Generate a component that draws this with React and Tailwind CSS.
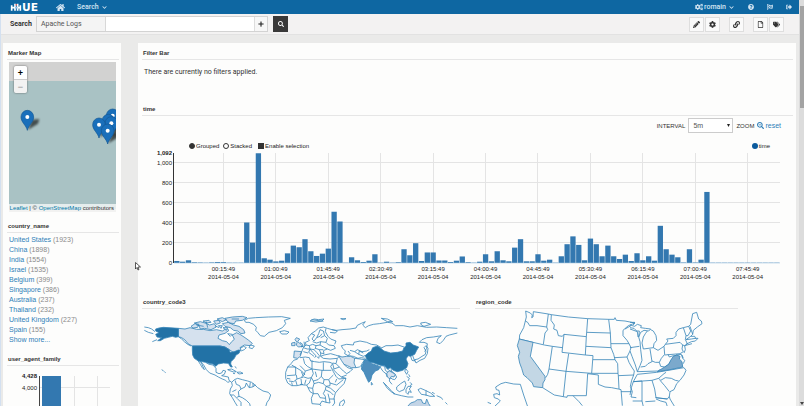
import { useState } from 'react'
import {
  FaHome,
  FaCogs,
  FaCog,
  FaQuestionCircle,
  FaFlagCheckered,
  FaSignOutAlt,
  FaPencilAlt,
  FaLink,
  FaRegFile,
  FaTags,
  FaSearch,
  FaPlus,
  FaChevronDown,
  FaSearchMinus,
} from 'react-icons/fa'

const countries = [
  ['United States', 1923],
  ['China', 1898],
  ['India', 1554],
  ['Israel', 1535],
  ['Belgium', 399],
  ['Singapore', 386],
  ['Australia', 237],
  ['Thailand', 232],
  ['United Kingdom', 227],
  ['Spain', 155],
]

// hits per 5 minute bucket
const hits = [
  20, 13, 27, 7, 5, 3, 6, 10, 9, 3, 3, 3, 403, 203, 1092, 47, 33, 16, 23, 96, 173, 157, 237, 117,
  70, 93, 143, 510, 413, 3, 57, 27, 10, 23, 87, 3, 13, 3, 8, 137, 77, 197, 20, 105, 105, 25, 25,
  10, 23, 65, 8, 3, 13, 87, 17, 117, 27, 17, 153, 237, 17, 17, 87, 23, 33, 3, 67, 187, 265, 180,
  27, 243, 187, 67, 173, 67, 40, 83, 20, 97, 27, 67, 23, 370, 137, 83, 57, 5, 137, 5, 33, 707,
  3, 3, 3, 3, 3, 3, 3, 3, 3, 3, 3, 3,
]

const ticks = [
  '00:15:49', '01:00:49', '01:45:49', '02:30:49', '03:15:49', '04:00:49',
  '04:45:49', '05:30:49', '06:15:49', '07:00:49', '07:45:49',
]

const pins = [
  [82, 231],
  [338, 227],
  [325, 243],
  [334, 250],
  [297, 254],
  [323, 272],
]

const chartFont = 'font-["Liberation_Sans",sans-serif] text-[6px]'

function Title({ children }) {
  return (
    <h2 className="border-b border-[#e6e6e6] pt-[6px] pb-[2px] text-[6px] leading-[8px] font-bold text-[#333] pl-px">
      {children}
    </h2>
  )
}

function ToolButton({ label, icon: Icon }) {
  return (
    <button
      aria-label={label}
      className="flex h-[15px] w-[15px] items-center justify-center border border-[#dedede] bg-[#fafafa] text-[#333]"
    >
      <Icon className="h-[7px] w-[7px]" />
    </button>
  )
}

function Logo() {
  return (
    <a href="#home" aria-label="Hue" className="flex h-[14px] items-center text-white">
      <svg viewBox="0 0 90 36" className="h-[12px] w-[30px] overflow-visible">
        <g fill="none" stroke="#fff" strokeWidth="5">
          <path d="M2 13V29M2 20H12M12 8V29" />
          <path d="M20 8V29M28 13V29M20 20H28" />
        </g>
        <path d="M12 20H20" stroke="#9cc4ea" strokeWidth="5" />
        <rect x="14" y="9" width="4" height="5" fill="#d66" />
        <text x="33" y="30" fill="#fff" className='font-["DejaVu_Sans",sans-serif] text-[32px] font-bold'>
          UE
        </text>
      </svg>
    </a>
  )
}

function TopNav() {
  return (
    <nav className="flex h-[14px] items-center bg-[#0e67a2] pl-[11px] pr-[7px] font-[family-name:Roboto,sans-serif] text-[7px] leading-[10px] font-medium text-[#d5e6f3]">
      <Logo />
      <a href="#home" aria-label="Home" className="ml-[15px]">
        <FaHome className="h-[9px] w-[9px]" />
      </a>
      <button className="ml-[12px] flex items-center gap-[3px]">
        Search <FaChevronDown className="h-[5px] w-[5px]" />
      </button>
      <button className="ml-auto flex items-center gap-px">
        <FaCogs className="h-[8px] w-[8px]" /> romain
        <FaChevronDown className="ml-[2px] h-[5px] w-[5px]" />
      </button>
      <a href="#help" aria-label="Help" className="ml-[14px]">
        <FaQuestionCircle className="h-[6px] w-[6px]" />
      </a>
      <a href="#tour" aria-label="Tour" className="ml-[13px]">
        <FaFlagCheckered className="h-[6px] w-[6px]" />
      </a>
      <a href="#logout" aria-label="Sign out" className="ml-[13px]">
        <FaSignOutAlt className="h-[6px] w-[6px]" />
      </a>
    </nav>
  )
}

function Toolbar() {
  const [query, setQuery] = useState('')
  return (
    <div className="flex h-[21px] items-center border-b border-[#e2e2e2] bg-[#f3f2f2] pl-[9px] pr-[15px] font-[family-name:Roboto,sans-serif] text-[7px] leading-[10px]">
      <label htmlFor="query" className="w-[22px] font-bold text-[#333]">
        Search
      </label>
      <div className="ml-[4px] flex h-[16px] items-stretch border border-[#d3d3d3]">
        <button className="w-[69px] border-r border-[#d8d8d8] bg-[#f4f4f4] pl-[4px] text-left text-[#555]">
          Apache Logs
        </button>
        <input
          id="query"
          value={query}
          onChange={(e) => setQuery(e.target.value)}
          className="w-[148px] bg-white px-1 outline-none"
        />
        <button
          aria-label="Add"
          className="flex w-[13px] items-center justify-center border-l border-[#ddd] bg-[#f7f7f7] text-[#222]"
        >
          <FaPlus className="h-[6px] w-[6px]" />
        </button>
      </div>
      <button
        aria-label="Run search"
        className="ml-[5px] flex h-[16px] w-[15px] items-center justify-center bg-[#393939] text-white"
      >
        <FaSearch className="h-[6px] w-[6px]" />
      </button>
      <div className="ml-auto flex items-center">
        <div className="flex gap-px">
          <ToolButton label="Edit" icon={FaPencilAlt} />
          <ToolButton label="Settings" icon={FaCog} />
        </div>
        <div className="mx-[9px]">
          <ToolButton label="Share" icon={FaLink} />
        </div>
        <div className="flex gap-px">
          <ToolButton label="New" icon={FaRegFile} />
          <ToolButton label="Dashboards" icon={FaTags} />
        </div>
      </div>
    </div>
  )
}

function MarkerMap() {
  return (
    <div className="relative mt-[2px] mr-[3px] ml-[2px] overflow-hidden">
      <svg viewBox="27 66 321 450" className="block w-full">
        <defs>
          <filter id="soft" x="-50%" y="-50%" width="200%" height="200%">
            <feGaussianBlur stdDeviation="3" />
          </filter>
        </defs>
        <rect x="27" y="66" width="321" height="450" fill="#d2d2d1" />
        <rect x="27" y="123" width="321" height="384" fill="#a9c2c4" />
        {pins.map(([x, y]) => (
          <g key={`${x}-${y}`} transform={`translate(${x} ${y})`}>
            <path d="M2 38L14 8L36 6L32 20Z" fill="#000" opacity="0.6" filter="url(#soft)" />
            <path
              d="M0 40C-3 25-19 16-19 0A19 20 0 0 1 19 0C19 16 3 25 0 40Z"
              fill="#1a6fba"
              stroke="#135894"
              strokeWidth="2"
            />
            <circle r="6" fill="#fff" />
          </g>
        ))}
      </svg>
      <div className="absolute top-[4px] left-[5px] w-[13px] overflow-hidden rounded-xs text-[9px] font-bold shadow-[0_0_2px_#555]">
        <button aria-label="Zoom in" className="block h-[14px] w-full border-b border-[#ccc] bg-white leading-[12px] text-black">
          +
        </button>
        <button aria-label="Zoom out" className="block h-[13px] w-full bg-[#f2f2f2] leading-[12px] text-[#aaa]">
          −
        </button>
      </div>
      <p className="absolute right-0 bottom-0 bg-white/70 px-[2px] text-[6px] leading-[8px] whitespace-nowrap text-[#333]">
        <a href="#leaflet" className="text-[#0078a8]">Leaflet</a> | ©{' '}
        <a href="#osm" className="text-[#0078a8]">OpenStreetMap</a> contributors
      </p>
    </div>
  )
}

function Sidebar() {
  return (
    <aside className="w-[118px] shrink-0 bg-[#fdfdfc] pr-[2px] pl-[4px]">
      <Title>Marker Map</Title>
      <MarkerMap />
      <div className="mt-[4px]">
        <Title>country_name</Title>
        <ul className="pt-[2px] pl-[2px] text-[7px] leading-[10px] text-[#8a8a8a]">
          {countries.map(([name, count]) => (
            <li key={name}>
              <a href="#country" className="text-[#2f7fb8]">{name}</a> ({count})
            </li>
          ))}
          <li>
            <a href="#more" className="text-[#2f7fb8]">Show more...</a>
          </li>
        </ul>
      </div>
      <div className="mt-[4px]">
        <Title>user_agent_family</Title>
        <svg viewBox="7 366 112 60" className={`block w-full ${chartFont}`} textAnchor="end" fill="#222">
          <g stroke="#e4e4e4">
            <path d="M39 387.5H110M74.5 376V426M97.5 376V426" />
          </g>
          <rect x="42" y="376" width="19" height="50" fill="#3378b0" />
          <path d="M39.5 376V426" stroke="#444" />
          <text x="37" y="378" className="font-bold">4,428</text>
          <text x="37" y="390">4,000</text>
        </svg>
      </div>
    </aside>
  )
}

function TimeChart() {
  return (
    <svg viewBox="142 150 651 142" className={`block w-full overflow-visible ${chartFont}`} fill="#222">
      <g stroke="#e4e4e4">
        {[200, 400, 600, 800, 1000].map((v) => (
          <path key={v} d={`M174 ${Math.round(263 - v * 0.1005) - 0.5}H780`} />
        ))}
        {ticks.map((t, i) => (
          <path key={t} d={`M${Math.round(223.4 + i * 52.43 - 0.5) + 0.5} 153V263`} />
        ))}
      </g>
      {hits.map((v, i) => (
        <rect
          key={i}
          x={174.2 + i * 5.825}
          y={263 - v * 0.1005}
          width="5.3"
          height={v * 0.1005}
          fill="#3378b0"
        />
      ))}
      <path d="M174 263H780" stroke="#a9c9e0" strokeWidth="0.6" />
      <path d="M173.5 153V263" stroke="#333" />
      <g textAnchor="end">
        <text x="172" y="155" className="font-bold">1,092</text>
        <text x="172" y="165">1,000</text>
        <text x="172" y="185">800</text>
        <text x="172" y="205">600</text>
        <text x="172" y="225">400</text>
        <text x="172" y="245">200</text>
        <text x="172" y="265">0</text>
      </g>
      <g textAnchor="middle">
        {ticks.map((t, i) => (
          <g key={t}>
            <text x={223.4 + i * 52.43} y="271">{t}</text>
            <text x={223.4 + i * 52.43} y="279">2014-05-04</text>
          </g>
        ))}
      </g>
    </svg>
  )
}

function ChartControls() {
  const [mode, setMode] = useState('grouped')
  const [selection, setSelection] = useState(true)
  const radio =
    'h-[6px] w-[6px] appearance-none rounded-full border border-[#333] bg-white checked:bg-[#333]'
  return (
    <div className="mt-[8px] flex h-[9px] items-center pr-[23px] pl-[47px] text-[6px] leading-[8px] text-[#222]">
      <label className="flex items-center gap-px">
        <input
          type="radio"
          name="mode"
          className={radio}
          checked={mode === 'grouped'}
          onChange={() => setMode('grouped')}
        />
        Grouped
      </label>
      <label className="ml-[4px] flex items-center gap-px">
        <input
          type="radio"
          name="mode"
          className={radio}
          checked={mode === 'stacked'}
          onChange={() => setMode('stacked')}
        />
        Stacked
      </label>
      <label className="ml-[6px] flex items-center gap-px">
        <input
          type="checkbox"
          className="h-[6px] w-[6px] appearance-none border border-[#333] bg-white checked:bg-[#333]"
          checked={selection}
          onChange={(e) => setSelection(e.target.checked)}
        />
        Enable selection
      </label>
      <span className="ml-auto flex items-center gap-px">
        <span className="h-[6px] w-[6px] rounded-full bg-[#0b5a9d]" />
        time
      </span>
    </div>
  )
}

function WorldMap() {
  return (
    <svg
      viewBox="21 42 954 291"
      className="block w-full"
      fill="none"
      stroke="#3584b8"
      strokeWidth="2.4"
      strokeLinejoin="round"
    >
      {/* north america */}
      <path
        fill="#d5e1ee"
        d="M130 100L150 102L165 98L185 103L205 103L225 107L245 104L262 108L275 100L282 106L270 115L252 120L249 130L262 137L275 140L283 149L290 140L298 133L292 120L305 113L318 120L330 128L340 135L352 145L345 152L328 150L315 158L318 165L308 168L295 172L283 164L270 156L255 153L172 153L160 147L150 135L140 128L130 125Z"
      />
      <path
        fill="#2272a6"
        d="M62 102L72 99L85 97L130 100L130 125L122 127L112 124L100 127L88 130L76 137L68 137L80 128L66 126L62 118L72 113L62 108Z"
      />
      <path
        fill="#2272a6"
        d="M172 153L255 153L270 156L283 164L285 172L298 170L310 165L316 166L312 175L303 180L298 190L288 200L287 207L292 216L287 216L280 205L265 204L250 207L242 214L234 207L222 205L212 202L190 198L178 190L173 180L172 165Z"
      />
      <path d="M28 96L40 98L50 102L60 110M28 106L40 112L55 116M130 125L140 132L148 140L158 148L168 153M66 134L52 140" />
      <path d="M316 160L326 154L334 158L328 164L318 168M346 150L358 153L352 161L342 158Z" />
      {/* arctic islands */}
      <path
        fill="#d5e1ee"
        d="M168 94L180 86L192 88L188 97L174 99ZM178 84L196 80L210 84L224 90L238 86L244 96L228 104L208 100L196 102L192 92ZM204 78L222 76L228 82L214 84ZM236 78L252 76L256 84L244 88ZM246 72L262 68L274 74L262 80ZM262 86L280 82L296 90L312 94L326 104L330 114L318 116L308 108L296 106L286 98L270 94ZM270 70L292 66L322 64L336 68L322 76L302 78L298 86L284 84L276 78ZM264 98L278 98L274 106ZM250 92L262 92L258 100Z"
      />
      <path d="M184 90L206 94M214 80L218 98M240 92L252 98M290 72L312 72M278 116L292 118L286 124Z" />
      <path d="M328 76L340 70L362 68L400 66L440 65L466 70L448 76L452 86L442 98L424 107L402 112L388 124L376 122L368 112L362 106L364 97L356 88L342 82L332 82Z" />
      <path d="M434 110L448 107L462 111L456 117L440 117Z" />
      {/* mexico, caribbean, south america */}
      <path d="M190 198L196 208L202 218L208 224L200 206L196 199M196 199L206 210L214 224L224 234L240 240L250 246L262 252L272 256L278 262L284 260M212 202L222 208L234 210L243 220L243 232L252 236L260 234L264 226L272 228L268 238L260 242L270 244L280 246L282 256L290 262" />
      <path d="M278 224L290 222L304 230L296 231L284 227ZM306 232L316 231L324 235L312 237ZM294 235L300 236M300 214L304 220M80 224L86 228M88 230L92 233" />
      <path d="M290 262L298 254L308 250L322 254L338 258L350 262L360 270L368 278L384 288L400 292L407 300L402 314L396 322L392 335M290 262L292 272L286 282L284 296L292 308L300 322L308 335" />
      <path d="M300 256L304 268L314 272L318 282L310 290L312 304L304 308L296 300L286 300M318 282L330 276L334 264M334 264L342 278L352 276L362 270M346 262L344 276M354 264L354 276M312 304L322 308L334 316L344 326L346 335M306 310L318 322L318 335M292 290L304 284" />
      {/* western edge of europe and africa */}
      <path d="M484 128L494 132L488 140L498 148L504 154L490 156L484 150L486 142L480 134ZM470 144L480 142L480 152L470 152ZM478 168L500 170L496 184L488 190L476 188Z" fill="#d5e1ee" />
      <path d="M488 192L476 196L468 206L458 216L452 232L452 250L458 264L470 272L486 272L504 268M458 216L482 216L482 240L456 242M470 210L500 228L510 240M484 240L486 252L476 260L462 258M486 252L506 246M470 262L472 272M482 256L486 270M498 252L500 268M456 250L466 252" />
      {/* eurasia */}
      <g transform="translate(495 0)">
        <path d="M30 78L42 72L56 74L72 72L66 78L48 81ZM34 74L70 79M122 71L138 71L130 74ZM244 70L262 72L278 80L262 80ZM362 84L376 82L392 88L372 94L364 90Z" />
        <path d="M28 138L24 128L34 116L46 108L56 99L70 96L82 100L96 104L112 108L106 114L90 112M96 104L110 106L126 104L150 102L168 99L172 91L184 85L196 80L188 90L196 98L206 92L220 88L238 86L262 82L276 84L286 92L310 92L330 96L352 92L380 97L410 96L440 98L472 100M472 114L448 120L438 124L430 136L420 146L410 142L414 130L424 122L400 126L380 128L366 134L358 142L372 142L382 146L380 160L374 170" />
        <path d="M34 116L44 120L36 132L42 138L50 128L56 116L60 104M50 128L60 124L66 116M60 104L70 108L74 122L62 128M74 122L82 130L78 142L62 140L50 144L38 140M78 100L76 110L84 124M78 142L86 150L102 152L106 160L92 166L82 162L72 166M62 140L60 150L48 152L38 148L28 152L18 150L10 158L6 168M60 150L70 156L82 162M48 152L46 160L58 164L70 164M28 152L30 162L42 164L46 160M10 158L22 162L30 162L26 172L34 178L42 184M0 142L8 148L4 156L14 152L12 140M30 162L38 172L48 182L44 188M42 164L50 172L58 182L56 190L50 184M58 164L62 174L72 176L70 166M62 174L62 184L72 180L92 176L106 180L118 184L112 190L90 192L70 190L62 184M84 124L92 132L108 138L104 148M6 168L0 180M18 150L16 142L26 138M10 170L24 174" />
        <path d="M128 160L124 152L140 148L160 150L162 142L180 138L200 142L214 148L230 150M128 160L136 168L134 176L144 182L150 176L144 168M150 166L164 170L176 178L190 184L204 178M144 182L160 184L174 190L184 188L196 190M164 170L172 164L186 170L200 168L208 164M176 178L178 168L190 174M118 184L124 190" />
        <path fill="#d5e1ee" d="M116 182L126 186L140 184L152 184L164 190L162 204L168 218L154 218L142 212L132 208L124 196Z" />
        <path d="M164 190L180 192L194 194L190 206L178 216L168 218M112 190L108 206L118 216L130 228L140 236L150 230L158 222L148 220L140 216L132 208M108 206L98 204M118 216L102 222L98 206M98 222L112 236L124 246L140 240M124 246L138 250M194 194L186 206L184 218" />
        <path fill="#2676a8" d="M196 182L204 174L214 168L218 158L232 153L242 160L252 168L272 174L292 172L308 168L312 158L318 152L318 144L330 142L340 150L356 156L350 166L344 178L332 184L324 182L318 192L324 206L320 218L308 226L292 230L280 226L272 218L262 222L254 212L238 210L222 204L206 200L200 192Z" />
        <path d="M242 160L258 152L276 152L294 150L312 156M230 150L244 158" />
        <path fill="#4d8dbc" d="M196 192L206 198L216 206L234 212L240 216L236 224L226 228L216 240L212 256L206 262L200 250L192 232L184 222L190 206Z" />
        <path d="M214 262L218 268L214 270ZM240 214L246 212L254 214L256 226L264 232L262 246L258 236L250 230L244 222ZM262 222L268 226L276 230L284 236L290 246L284 254L276 252L270 246L268 258L276 268M264 232L272 236L280 244M272 218L276 230M318 222L324 230L320 238L314 228ZM332 184L336 196L344 198L338 182M344 194L354 192L366 184L376 178L378 168L372 158L378 152L384 160L382 176L374 190L360 196L348 204Z" />
        <path fill="#d5e1ee" d="M260 234L268 228L276 232L286 238L282 246L274 244L270 252L262 246Z" />
        <path d="M250 262L262 274L276 290L284 296L276 292L262 280ZM280 296L304 302L324 306L340 306M290 276L302 266L314 258L318 268L312 284L298 290L290 284ZM318 284L324 274L334 274L328 282L334 292L326 290L324 298L318 292ZM320 244L328 250L324 258M330 262L336 268L330 272M326 238L330 246M354 284L362 280L376 286L392 294L404 304L390 304L378 300L364 298L358 290ZM378 286L378 302M410 302L424 308L428 314M396 292L404 296M436 322L442 328" />
        <path fill="#c3d4e6" d="M322 335L332 324L344 320L352 314L364 314L368 324L376 326L380 312L386 326L392 335Z" />
        {/* africa */}
        <path d="M0 188L16 186L28 188L32 198L44 200L58 202L72 200L90 202L98 206L92 214L100 230L108 244L116 252L138 250L132 266L118 280L106 294L102 310L104 324L96 335M36 196L36 222L66 226L72 226L94 226M70 202L70 226M10 190L14 206L22 214L36 222M0 212L16 228L36 222M16 228L12 240L4 246M36 222L40 236L34 248L24 250L12 246M66 226L64 244L54 254L40 258L34 248M64 244L72 254L86 254L100 240M86 254L90 264L110 270L130 254M72 254L70 266L78 274L90 272L90 264M40 258L42 266L56 262L70 266M34 248L28 264L20 270L24 278L38 280L42 266M0 268L12 270L20 270M24 278L30 290L40 296L38 280M40 296L34 310L36 326L60 328L66 318L78 322L76 304L70 296L76 284L78 274M40 296L54 296L60 308L76 310M78 274L92 280L106 292M76 284L92 292L100 300M84 296L88 312L104 312M78 322L90 324L88 312M60 328L64 335M4 230L10 244M46 230L50 246M110 252L106 262M18 254L14 268" />
        <path d="M132 314L134 322L126 335L118 332L120 322Z" />
      </g>
    </svg>
  )
}

function RegionMap() {
  return (
    <svg
      viewBox="30 42 789 291"
      className="block w-full"
      fill="none"
      stroke="#3584b8"
      strokeWidth="2.4"
      strokeLinejoin="round"
    >
      <path d="M182 48L196 54L202 60L200 68L204 66L205 50L250 57L245 96L216 92L194 92L188 82L181 78L184 66L182 48M181 78L176 98L164 120L163 132L204 142L238 150M245 96L248 104L240 114L235 148M250 57L259 59L258 76L268 90L266 102L276 106L280 122L292 124L297 118M259 59L310 66L368 71L364 125L297 118L291 172L361 180L364 125M238 150L262 154L292 158M262 154L252 222L303 229L311 176M252 222L248 238L242 248" />
      <path fill="#c3d7e5" d="M163 132L204 142L196 184L240 244L240 254L234 264L233 278L206 275L202 264L186 248L176 240L170 220L164 204L160 184L164 172L157 152Z" />
      <path d="M233 278L268 300L295 305L303 229L380 235L384 182L361 180M295 305L306 307L307 302L364 302L368 236L400 240L400 268L420 276L440 278L460 282L468 284M368 71L431 73L436 114L366 112M436 114L438 158L363 154M438 158L446 178L450 194L384 194M450 194L458 206L459 235L380 235M459 235L460 242L462 282M431 73L448 73L450 68L454 76L480 78L510 84L490 92L474 106L474 122L486 136L492 146L438 146M492 146L498 158L494 170L486 186L448 188M486 186L492 202L500 216L508 228L506 240L460 242M468 284L470 306L472 332M468 290L500 290M506 240L500 256L496 274L502 290L498 306L514 308M324 302L342 320L352 332M498 92L480 102" />
      <path d="M88 335L106 318L100 312L88 308L86 298L96 296L104 300L102 286L94 284L92 276L108 266L122 262L146 267L166 268L176 300L188 335M68 322L78 326" />
      <g transform="translate(495 0)">
        <path d="M0 82L14 82L10 90M0 90L14 94L22 88L34 92L32 98L46 100L62 102L56 108L42 106L32 112L26 126L28 108L20 108L12 100L0 98M0 102L22 110L24 126M28 154L0 158M32 164L30 140L26 126M62 104L70 108L78 122L80 136L72 146L70 158L40 162L36 144L40 126L46 116L52 108M32 164L36 196L30 212L22 230M60 162L66 200L54 206L46 214L32 216M70 158L84 166L102 154L104 178L94 190L88 202L76 202L66 198M102 154L106 148L150 142L158 150L156 162L160 170L150 176L104 180M106 148L114 138L110 132L130 130L138 122L138 112L146 102L160 98L168 122L166 134L172 146L164 152L158 150M160 98L176 94L182 108L174 122L168 122M176 94L182 88L188 56L200 52L206 72L214 78L216 86L202 96L190 106L188 118L182 124L168 134M188 118L180 94M168 134L184 132L196 130L204 130L196 138L184 140L168 148M182 124L194 124L198 132M164 152L186 146M164 152L166 164L162 174M88 202L92 214L104 216L116 208L124 196L132 186L138 182L130 182L118 186L114 178M22 230L84 228L90 224M22 238L80 232L162 218" />
        <path fill="#7ba9cc" d="M82 230L94 222L104 216L116 208L122 196L130 184L140 180L150 184L148 192L156 200L158 216L120 224Z" />
        <path d="M138 180L154 178L158 190L164 196L160 206M156 180L160 190M162 218L168 226L162 240L150 256L140 266L132 284L120 290L118 304L120 312L134 335M22 238L10 260L66 256L86 250L102 236L108 232M86 250L92 256L106 248L124 250L136 256L146 258M10 260L4 278L0 300M10 260L36 258L36 318L40 335M66 256L74 282L78 308L112 312L118 304M90 256L104 272L118 290M36 318L8 318M46 320L76 318M76 308L112 312M78 312L92 318L108 322L112 335M0 168L6 184L16 210L22 230" />
      </g>
    </svg>
  )
}

function Dashboard() {
  return (
    <main className="min-w-0 flex-1 bg-[#fdfdfc] pr-[3px] pl-[4px]">
      <section>
        <Title>Filter Bar</Title>
        <p className="pt-[7px] pb-[22px] pl-[2px] font-[family-name:Roboto,sans-serif] text-[7px] leading-[10px] text-[#333]">
          There are currently no filters applied.
        </p>
      </section>
      <section>
        <Title>time</Title>
        <div className="mt-[2px] flex h-[15px] items-center justify-end gap-[3px] pr-[12px] text-[6px] leading-[8px] text-[#333]">
          <label htmlFor="interval">INTERVAL</label>
          <div className="relative">
            <select
              id="interval"
              className="block h-[15px] w-[45px] appearance-none border border-[#ccc] bg-white pl-[4px] text-[7px] text-[#555]"
            >
              <option>5m</option>
            </select>
            <svg viewBox="0 0 4 4" className="pointer-events-none absolute top-[6px] right-[3px] h-[3px] w-[3px]">
              <path d="M0 0H4L2 4Z" fill="#222" />
            </svg>
          </div>
          <span>ZOOM</span>
          <a href="#reset" className="flex items-center gap-px text-[7px] text-[#2f7fb8]">
            <FaSearchMinus className="h-[7px] w-[7px]" /> reset
          </a>
        </div>
        <ChartControls />
        <TimeChart />
      </section>
      <div className="grid grid-cols-[318fr_263fr_40fr] gap-x-[15px]">
        <section>
          <Title>country_code3</Title>
          <WorldMap />
        </section>
        <section>
          <Title>region_code</Title>
          <RegionMap />
        </section>
      </div>
    </main>
  )
}

export default function App() {
  return (
    <div className='flex h-screen overflow-hidden font-["Liberation_Sans",sans-serif]'>
      <div className="flex min-w-0 flex-1 flex-col">
        <TopNav />
        <div className="flex min-h-0 flex-1 flex-col border-l border-[#d3e0f0] bg-[#eaeae9]">
          <Toolbar />
          <div className="relative flex min-h-0 flex-1 gap-[17px] pt-[8px] pr-[3px] pl-[2px]">
            <Sidebar />
            <Dashboard />
            <svg viewBox="0 0 12 18" className="absolute top-[227px] left-[134px] h-[9px] w-[6px]">
              <path d="M1 1V14L4 11L6 16L8 15L6 10H11Z" fill="#fff" stroke="#222" strokeWidth="1.5" />
            </svg>
          </div>
        </div>
      </div>
      <div className="flex w-[5px] flex-col items-center bg-[#dcdcdc] pt-[6px] pl-px">
        <div className="h-[102px] w-full bg-[#a3a3a3]" />
        <svg viewBox="0 0 4 3" className="mt-auto mb-px h-[3px] w-[4px]">
          <path d="M0 0H4L2 3Z" fill="#444" />
        </svg>
      </div>
    </div>
  )
}
